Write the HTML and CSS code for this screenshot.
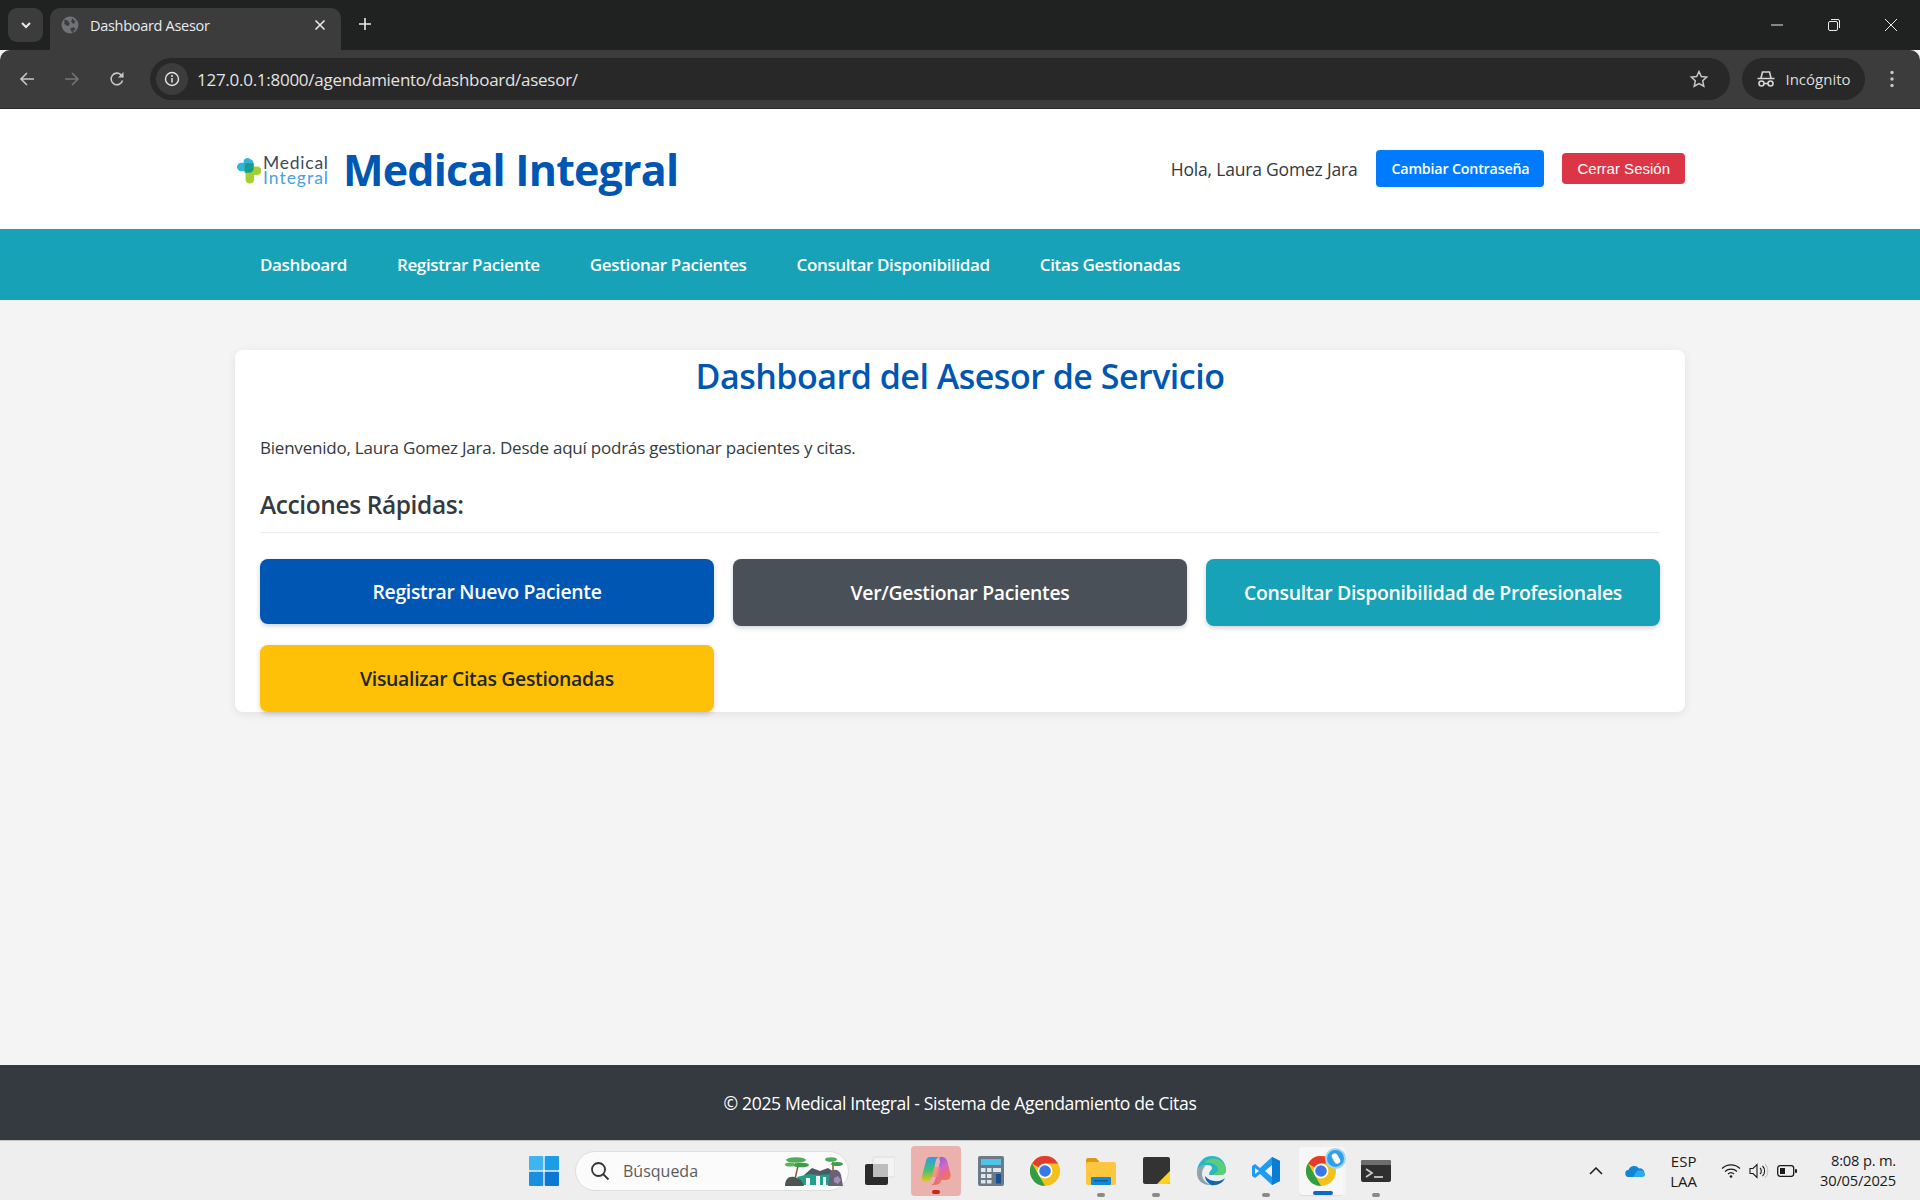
FILE: index.html
```html
<!DOCTYPE html>
<html lang="es">
<head>
    <meta charset="UTF-8">
    <meta name="viewport" content="width=device-width, initial-scale=1.0">
    <title>Dashboard Asesor</title>
    <link rel="stylesheet" href="styles.css">
</head>
<body>
    <div class="tabstrip">
        <div class="tab-search">
            <svg width="14" height="14" viewBox="0 0 14 14"><path d="M3 5l4 4 4-4" fill="none" stroke="#e8eaed" stroke-width="2"/></svg>
        </div>
        <div class="tab">
            <svg class="tab-globe" width="18" height="18" viewBox="0 0 16 16"><circle cx="8" cy="8" r="7.500" fill="#6f7276"/><path d="M3 3l3 1 2 3-2 2-3-2zM10 2l3 3-2 2-2-2zM8 11l3-1 2 1-3 4z" fill="#3d3e40"/></svg>
            <span class="tab-title">Dashboard Asesor</span>
            <svg class="tab-close" width="12" height="12" viewBox="0 0 12 12"><path d="M1.500 1.500l9 9M10.500 1.500l-9 9" stroke="#e8eaed" stroke-width="1.600"/></svg>
        </div>
        <svg class="tab-new" width="14" height="14" viewBox="0 0 14 14"><path d="M7 1v12M1 7h12" stroke="#e8eaed" stroke-width="1.600"/></svg>
        <div class="window-btns">
            <svg width="14" height="14" viewBox="0 0 14 14"><path d="M1 7h12" stroke="#e8eaed" stroke-width="1"/></svg>
            <svg width="14" height="14" viewBox="0 0 14 14"><rect x="1.500" y="3.500" width="9" height="9" rx="1.500" fill="none" stroke="#e8eaed"/><path d="M4 1.500h7a1.500 1.500 0 0 1 1.500 1.500v7" fill="none" stroke="#e8eaed"/></svg>
            <svg width="14" height="14" viewBox="0 0 14 14"><path d="M1 1l12 12M13 1L1 13" stroke="#e8eaed" stroke-width="1"/></svg>
        </div>
    </div>

    <div class="toolbar">
        <svg class="tool-icon" width="16" height="16" viewBox="0 0 16 16"><path d="M15 8H2M8 2L2 8l6 6" fill="none" stroke="#c7c7c7" stroke-width="1.600"/></svg>
        <svg class="tool-icon" width="16" height="16" viewBox="0 0 16 16"><path d="M1 8h13M8 2l6 6-6 6" fill="none" stroke="#757575" stroke-width="1.600"/></svg>
        <svg class="tool-icon" width="16" height="16" viewBox="0 0 16 16"><path d="M13.500 9.500A5.800 5.800 0 1 1 12 3.800L14 6" fill="none" stroke="#c7c7c7" stroke-width="1.600"/><path d="M14.500 1v5.500H9z" fill="#c7c7c7"/></svg>
        <div class="omnibox">
            <div class="site-info">
                <svg width="16" height="16" viewBox="0 0 16 16"><circle cx="8" cy="8" r="6.500" fill="none" stroke="#e3e3e3" stroke-width="1.400"/><path d="M8 7v4.500" stroke="#e3e3e3" stroke-width="1.500"/><circle cx="8" cy="4.900" r="1" fill="#e3e3e3"/></svg>
            </div>
            <span class="url">127.0.0.1:8000/agendamiento/dashboard/asesor/</span>
            <svg class="star" width="20" height="20" viewBox="0 0 20 20"><path d="M10 2.500l2.300 5 5.400.6-4 3.700 1.100 5.400L10 14.500l-4.800 2.700 1.100-5.400-4-3.700 5.400-.6z" fill="none" stroke="#c7c7c7" stroke-width="1.500"/></svg>
        </div>
        <div class="incognito">
            <svg width="20" height="18" viewBox="0 0 20 18"><path d="M5 8l1.500-6h7L15 8M1.500 8.500h17" fill="none" stroke="#d5d5d5" stroke-width="1.600"/><circle cx="5.500" cy="13.500" r="2.500" fill="none" stroke="#d5d5d5" stroke-width="1.600"/><circle cx="14.500" cy="13.500" r="2.500" fill="none" stroke="#d5d5d5" stroke-width="1.600"/><path d="M8 13.500h4" stroke="#d5d5d5" stroke-width="1.600"/></svg>
            <span>Incógnito</span>
        </div>
        <svg class="menu-dots" width="6" height="18" viewBox="0 0 6 18"><circle cx="3" cy="2.500" r="1.700" fill="#c7c7c7"/><circle cx="3" cy="9" r="1.700" fill="#c7c7c7"/><circle cx="3" cy="15.500" r="1.700" fill="#c7c7c7"/></svg>
    </div>

    <header class="site-header">
        <div class="container header-row">
            <div class="brand">
                <svg class="logo" width="92" height="40" viewBox="0 0 92 40">
                    <g transform="translate(0 8) scale(.95)">
                        <path d="M9 1.500a4 4 0 0 1 4 0l3 2c1 1 1.500 2 1.500 4V10h-4v5H5c-3 0-5-2-5-4.500S2 6 5 6h2V4c0-1 1-2 2-2.500z" fill="#2fb4dc"/>
                        <path d="M13 10h8c3 0 4.500 2 4.500 4.500S24 19 21 19h-3v5c0 2.500-2 4-4.500 4S9 26.500 9 24v-9h4z" fill="#a3cf33"/>
                        <path d="M8 6.500h9.500V12c0 2.500-2 4.500-4.500 4.500H8z" fill="#1c9a8a"/>
                    </g>
                    <text class="logo-top" x="26" y="20" textLength="65">Medical</text>
                    <text class="logo-bottom" x="26" y="35" textLength="65">Integral</text>
                </svg>
                <h1 class="brand-name">Medical Integral</h1>
            </div>
            <div class="user-area">
                <span class="hello">Hola, Laura Gomez Jara</span>
                <a class="btn-pass" href="#">Cambiar Contraseña</a>
                <a class="btn-logout" href="#">Cerrar Sesión</a>
            </div>
        </div>
    </header>

    <nav class="main-nav">
        <div class="container nav-row">
            <a href="#">Dashboard</a>
            <a href="#">Registrar Paciente</a>
            <a href="#">Gestionar Pacientes</a>
            <a href="#">Consultar Disponibilidad</a>
            <a href="#">Citas Gestionadas</a>
        </div>
    </nav>

    <main class="content">
        <section class="card">
            <h2 class="card-title">Dashboard del Asesor de Servicio</h2>
            <p class="welcome">Bienvenido, Laura Gomez Jara. Desde aquí podrás gestionar pacientes y citas.</p>
            <h3 class="section-title">Acciones Rápidas:</h3>
            <div class="actions">
                <a class="action action-blue" href="#">Registrar Nuevo Paciente</a>
                <a class="action action-gray" href="#">Ver/Gestionar Pacientes</a>
                <a class="action action-teal" href="#">Consultar Disponibilidad de Profesionales</a>
                <a class="action action-yellow" href="#">Visualizar Citas Gestionadas</a>
            </div>
        </section>
    </main>

    <footer class="site-footer">© 2025 Medical Integral - Sistema de Agendamiento de Citas</footer>

    <div class="taskbar">
        <div class="task-center">
            <svg class="task-start" width="30" height="30" viewBox="0 0 30 30">
                <rect x="0" y="0" width="14.300" height="14.300" rx="1" fill="#3fb4f0"/>
                <rect x="15.700" y="0" width="14.300" height="14.300" rx="1" fill="#1b9de6"/>
                <rect x="0" y="15.700" width="14.300" height="14.300" rx="1" fill="#1a8fe0"/>
                <rect x="15.700" y="15.700" width="14.300" height="14.300" rx="1" fill="#0a78d4"/>
            </svg>
            <div class="task-search">
                <svg width="20" height="20" viewBox="0 0 20 20"><circle cx="8.500" cy="8.500" r="6.500" fill="none" stroke="#333" stroke-width="1.800"/><path d="M13 13l5.500 5.500" stroke="#333" stroke-width="1.800"/></svg>
                <span>Búsqueda</span>
                <svg class="search-art" width="60" height="30" viewBox="0 0 60 30">
                    <path d="M11 23L14 10" stroke="#8a5a2e" stroke-width="1.500"/>
                    <path d="M49 17V6" stroke="#8a5a2e" stroke-width="1.500"/>
                    <ellipse cx="12" cy="4" rx="10" ry="2.800" fill="#4fae55"/>
                    <ellipse cx="17" cy="9" rx="8" ry="2.300" fill="#3f9c4a"/>
                    <ellipse cx="6" cy="8.500" rx="5" ry="2" fill="#57b65c"/>
                    <ellipse cx="47" cy="3.500" rx="6" ry="2.300" fill="#4fae55"/>
                    <ellipse cx="53" cy="8" rx="6" ry="2" fill="#3f9c4a"/>
                    <path d="M20 19l8-7 8 3 8-3 6 4 3 11H22z" fill="#4f5a66"/>
                    <path d="M13 21l12-3 11 1 13-1 4 11H17z" fill="#1f9f8c"/>
                    <path d="M1 30c0-7 4-10 9-9 5 1 9 4 10 9z" fill="#4c5550"/>
                    <path d="M22 22h4v8h-4zM32 20h4v10h-4zM39 21h3v9h-3z" fill="#eef7f6"/>
                    <path d="M46 16c4-4 10-2 11 3l2 11H44z" fill="#6a6178"/>
                    <path d="M50 22l4-2 3 4-3 4-4-2z" fill="#a08fb0"/>
                </svg>
            </div>
            <svg class="task-icon" width="30" height="30" viewBox="0 0 30 30">
                <rect x="8" y="1" width="22" height="20" rx="2" fill="#f3f3f3" stroke="#ddd"/>
                <rect x="0" y="8" width="23" height="21" rx="2" fill="#2b2b2b"/>
                <rect x="8" y="8" width="15" height="13" fill="#bdbdbd"/>
            </svg>
            <div class="task-copilot">
                <svg width="30" height="30" viewBox="0 0 30 30">
                    <defs>
                        <linearGradient id="cpA" x1="0" y1="0" x2="0" y2="1"><stop offset="0" stop-color="#2b9bea"/><stop offset=".55" stop-color="#49c26a"/><stop offset="1" stop-color="#f4c21b"/></linearGradient>
                        <linearGradient id="cpB" x1="0" y1="0" x2="0.600" y2="1"><stop offset="0" stop-color="#5a5fe6"/><stop offset=".55" stop-color="#d765c6"/><stop offset="1" stop-color="#f5773a"/></linearGradient>
                    </defs>
                    <path d="M9 1h10c-2 0-3.500 1-4 3L11 21c-1 3-3 5-6 5H5C2 26 0 23 1 20L5 5c.5-2.500 2-4 4-4z" fill="url(#cpA)"/>
                    <path d="M19 1h2c3 0 5 2 5.500 5l3 12c.5 3-1 6-4 6h-5l-1 2c-1 2-3 3-6 3H8c4 0 5-2 6-5l5-18c0-2-1-5 0-5z" fill="url(#cpB)"/>
                    <path d="M13 11h7l-3 10h-7z" fill="#f08a6b" opacity=".7"/>
                </svg>
                <span class="copilot-dot"></span>
            </div>
            <svg class="task-icon task-calc" width="26" height="30" viewBox="0 0 26 30">
                <rect x="0" y="0" width="26" height="30" rx="2" fill="#6b7a88"/>
                <rect x="3" y="3" width="20" height="6" fill="#4fc3ea"/>
                <rect x="3" y="12" width="4.500" height="4" fill="#dfe5ea"/><rect x="9" y="12" width="4.500" height="4" fill="#dfe5ea"/><rect x="15" y="12" width="8" height="4" fill="#dfe5ea"/>
                <rect x="3" y="18" width="4.500" height="4" fill="#dfe5ea"/><rect x="9" y="18" width="4.500" height="4" fill="#dfe5ea"/>
                <rect x="3" y="24" width="4.500" height="3.500" fill="#dfe5ea"/><rect x="9" y="24" width="4.500" height="3.500" fill="#dfe5ea"/>
                <rect x="18" y="18" width="5" height="9.500" fill="#1a4f8c"/>
            </svg>
            <svg class="task-icon task-chrome" width="30" height="30" viewBox="0 0 30 30">
                <circle cx="15" cy="15" r="15" fill="#f2c21a"/>
                <path d="M15 15L2 7.500A15 15 0 0 1 28 7.500H15z" fill="#e33b2e"/>
                <path d="M15 30A15 15 0 0 1 2 7.500L9 19.500 15 30z" fill="#2f9e44"/>
                <circle cx="15" cy="15" r="7.500" fill="#fff"/>
                <circle cx="15" cy="15" r="5.800" fill="#3b78e7"/>
            </svg>
            <div class="task-slot">
                <svg width="30" height="28" viewBox="0 0 30 28">
                    <path d="M0 3a2 2 0 0 1 2-2h8l3 3h0v4H0z" fill="#d99a0e"/>
                    <rect x="0" y="5" width="30" height="23" rx="2" fill="#fcc73f"/>
                    <rect x="5" y="20" width="20" height="8" rx="1" fill="#0f8ad8"/>
                    <rect x="8" y="23" width="14" height="1.500" fill="#0a5ea0"/>
                </svg>
                <span class="task-dot"></span>
            </div>
            <div class="task-slot">
                <svg width="27" height="27" viewBox="0 0 27 27">
                    <rect width="27" height="27" rx="2" fill="#333"/>
                    <path d="M27 14v11a2 2 0 0 1-2 2H14z" fill="#ffd21e"/>
                </svg>
                <span class="task-dot"></span>
            </div>
            <svg class="task-icon" width="30" height="30" viewBox="0 0 30 30">
                <path d="M1 15C2 6 8 0 16 0c8 0 14 6 14 14 0 3-2 5-6 5H13c0-4 3-5 3-7 0-2-2-3-5-3-5 0-9 3-10 6z" fill="#2ab5c9"/>
                <path d="M8 7c4-5 12-6 17-2 4 3 5 6 5 9 0 3-2 5-6 5h-7c1-2 5-2 5-6 0-4-6-7-14-6z" fill="#5bce7a"/>
                <path d="M1 15c0-3 5-6 9-6-3 3-4 6-4 9 0 5 4 9 9 11C7 30 0 24 1 15z" fill="#8fa3ae"/>
                <path d="M15 29c-3-2-6-5-6-9 5 6 14 7 20 2-2 5-8 8-14 7z" fill="#1565b0"/>
            </svg>
            <div class="task-slot">
                <svg width="30" height="30" viewBox="0 0 30 30">
                    <path d="M21 1l8 4v20l-8 4L9 18l-5 4-3-2v-10l3-2 5 4z" fill="#1f9cf0"/>
                    <path d="M21 1l8 4v20l-8 4z" fill="#0a7cd1"/>
                    <path d="M21 9l-7 6 7 6z" fill="#f0f0f0"/>
                    <path d="M4 12l4 3-4 3z" fill="#f0f0f0"/>
                </svg>
                <span class="task-dot"></span>
            </div>
            <div class="task-active">
                <svg width="30" height="30" viewBox="0 0 30 30">
                    <circle cx="15" cy="15" r="15" fill="#f2c21a"/>
                    <path d="M15 15L2 7.500A15 15 0 0 1 28 7.500H15z" fill="#e33b2e"/>
                    <path d="M15 30A15 15 0 0 1 2 7.500L9 19.500 15 30z" fill="#2f9e44"/>
                    <circle cx="15" cy="15" r="7.500" fill="#fff"/>
                    <circle cx="15" cy="15" r="5.800" fill="#3b78e7"/>
                </svg>
                <span class="task-badge"><span class="task-badge-mark"></span></span>
                <span class="task-bar"></span>
            </div>
            <div class="task-slot">
                <svg width="30" height="22" viewBox="0 0 30 22">
                    <rect width="30" height="22" rx="2" fill="#2f2f2f"/>
                    <path d="M0 2a2 2 0 0 1 2-2h26a2 2 0 0 1 2 2v3H0z" fill="#6d6d6d"/>
                    <path d="M5 9l6 4-6 4" fill="none" stroke="#c9c9c9" stroke-width="1.800"/>
                    <path d="M13 17h9" stroke="#c9c9c9" stroke-width="1.800"/>
                </svg>
                <span class="task-dot"></span>
            </div>
        </div>
        <div class="tray">
            <svg width="14" height="8" viewBox="0 0 14 8"><path d="M1 7l6-6 6 6" fill="none" stroke="#1a1a1a" stroke-width="1.500"/></svg>
            <svg class="tray-cloud" width="20" height="13" viewBox="0 0 20 13"><path d="M4 13a3.500 3.500 0 0 1-.5-7A6 6 0 0 1 14 4.500 4.300 4.300 0 0 1 16 13z" fill="#1284d8"/><path d="M8 13l4-6c3-2 8 0 8 3.500 0 1.500-1 2.500-3 2.500z" fill="#2fa8ec"/></svg>
            <div class="lang"><span>ESP</span><span>LAA</span></div>
            <div class="tray-icons">
                <svg width="20" height="15" viewBox="0 0 20 15"><path d="M1 5.500a13 13 0 0 1 18 0M4 8.500a9 9 0 0 1 12 0M7 11a4.500 4.500 0 0 1 6 0" fill="none" stroke="#1a1a1a" stroke-width="1.200"/><circle cx="10" cy="13.500" r="1.300" fill="#1a1a1a"/></svg>
                <svg width="20" height="16" viewBox="0 0 20 16"><path d="M1 5.500h3l4-4v13l-4-4H1z" fill="none" stroke="#1a1a1a" stroke-width="1.100"/><path d="M11 5a4 4 0 0 1 0 6M13.500 3a7 7 0 0 1 0 10" fill="none" stroke="#1a1a1a" stroke-width="1.100"/><path d="M16 1a10 10 0 0 1 0 14" fill="none" stroke="#c4c4c4" stroke-width="1.100"/></svg>
                <svg width="20" height="12" viewBox="0 0 20 12"><rect x=".7" y=".7" width="16" height="10.600" rx="2.500" fill="none" stroke="#1a1a1a" stroke-width="1.300"/><rect x="3" y="3" width="5" height="6" fill="#1a1a1a"/><rect x="18" y="4" width="2" height="4" rx="1" fill="#1a1a1a"/></svg>
            </div>
            <div class="clock"><span>8:08 p. m.</span><span>30/05/2025</span></div>
        </div>
    </div>
</body>
</html>
```

FILE: styles.css
```css
* {
    box-sizing: border-box;
}

html, body {
    height: 100%;
}

body {
    margin: 0;
    display: flex;
    flex-direction: column;
    height: 1200px;
    overflow: hidden;
    font-family: "Open Sans", "Noto Sans", Arial, sans-serif;
    background-color: #f4f4f4;
    color: #333a40;
}

a {
    text-decoration: none;
}

/* browser frame */
.tabstrip {
    height: 50px;
    flex: none;
    display: flex;
    align-items: flex-end;
    background-color: #202222;
    color: #e8eaed;
    padding-left: 8px;
}

.tab-search {
    width: 35px;
    height: 34px;
    margin-bottom: 8px;
    border-radius: 9px;
    background-color: #3c3c3c;
    display: flex;
    align-items: center;
    justify-content: center;
}

.tab {
    width: 291px;
    height: 42px;
    margin-left: 7px;
    padding: 0 15px 8px 11px;
    border-radius: 10px 10px 0 0;
    background-color: #3c3c3c;
    display: flex;
    align-items: center;
}

.tab-globe {
    flex: none;
    margin-right: 11px;
}

.tab-title {
    flex: 1;
    font-size: 14.500px;
    letter-spacing: -0.3px;
}

.tab-close {
    flex: none;
}

.tab-new {
    margin: 0 0 19px 17px;
}

.window-btns {
    margin: 0 22px 18px auto;
    display: flex;
    gap: 43px;
}

.toolbar {
    height: 59px;
    flex: none;
    display: flex;
    align-items: center;
    background-color: #3c3c3c;
    border-radius: 10px 10px 0 0;
    border-bottom: 1px solid #2a2a2a;
    padding: 0 14px 0 19px;
}

.tool-icon {
    flex: none;
    margin-right: 29px;
}

.tool-icon:nth-child(3) {
    margin-right: 25px;
}

.omnibox {
    width: 1580px;
    height: 42px;
    padding: 0 21px 0 6px;
    border-radius: 21px;
    background-color: #282828;
    display: flex;
    align-items: center;
}

.site-info {
    width: 32px;
    height: 32px;
    border-radius: 50%;
    background-color: #3c3c3c;
    display: flex;
    align-items: center;
    justify-content: center;
    margin-right: 9px;
}

.url {
    flex: 1;
    font-size: 17px;
    letter-spacing: -0.27px;
    color: #e3e3e3;
}

.incognito {
    width: 123px;
    height: 42px;
    margin-left: 12px;
    border-radius: 21px;
    background-color: #282828;
    display: flex;
    align-items: center;
    justify-content: center;
    gap: 9px;
    font-size: 15px;
    color: #dcdcdc;
}

.menu-dots {
    margin-left: 24px;
}

/* site */
.container {
    width: 1450px;
    margin: 0 auto;
}

.site-header {
    height: 120px;
    flex: none;
    background-color: #fff;
}

.header-row {
    height: 100%;
    display: flex;
    align-items: center;
    justify-content: space-between;
    padding: 0 0 1px 2px;
}

.brand {
    display: flex;
    align-items: center;
    gap: 14px;
}

.logo {
    flex: none;
}

.logo text {
    font-family: "Lato", sans-serif;
    font-size: 17.500px;
}

.logo-top {
    fill: #3d4a5c;
}

.logo-bottom {
    fill: #4a9fe0;
}

.brand-name {
    margin: 0 0 -2px;
    font-size: 43px;
    font-weight: 700;
    letter-spacing: -0.8px;
    color: #0056b3;
}

.user-area {
    display: flex;
    align-items: center;
    gap: 18px;
}

.hello {
    margin-right: 1px;
    font-size: 17.500px;
    letter-spacing: -0.2px;
    color: #333a40;
}

.btn-pass {
    padding: 9px 15px;
    border-radius: 4px;
    background-color: #007bff;
    color: #fff;
    font-size: 14.300px;
    font-weight: 600;
    letter-spacing: -0.2px;
}

.btn-logout {
    padding: 7px 15px;
    border-radius: 4px;
    background-color: #dc3545;
    color: #fff;
    font-family: "Liberation Sans", Arial, sans-serif;
    font-size: 15px;
}

.main-nav {
    height: 71px;
    flex: none;
    background-color: #17a2b8;
}

.nav-row {
    height: 100%;
    display: flex;
    align-items: center;
    gap: 50px;
    padding-left: 25px;
}

.nav-row a {
    color: #fff;
    font-size: 17px;
    font-weight: 600;
    letter-spacing: -0.36px;
}

.content {
    flex: 1;
    padding-top: 50px;
}

.card {
    width: 1450px;
    height: 362px;
    margin: 0 auto;
    padding: 0 25px;
    border-radius: 8px;
    background-color: #fff;
    box-shadow: 0 2px 10px rgba(0, 0, 0, 0.08);
}

.card-title {
    margin: 0;
    padding-top: 3px;
    text-align: center;
    font-size: 34px;
    font-weight: 600;
    letter-spacing: -0.5px;
    color: #0056b3;
}

.welcome {
    margin: 37px 0 0;
    font-size: 17px;
    letter-spacing: -0.22px;
    color: #333a40;
}

.section-title {
    margin: 29px 0 0;
    padding-bottom: 11px;
    border-bottom: 1px solid #e9ecef;
    font-size: 24.500px;
    font-weight: 600;
    letter-spacing: -0.4px;
    color: #343a40;
}

.actions {
    margin-top: 26px;
    display: grid;
    grid-template-columns: repeat(3, 1fr);
    gap: 19px;
    align-items: start;
}

.action {
    height: 67px;
    border-radius: 8px;
    display: flex;
    align-items: center;
    justify-content: center;
    color: #fff;
    font-size: 19.400px;
    font-weight: 600;
    letter-spacing: -0.3px;
    box-shadow: 0 2px 5px rgba(0, 0, 0, 0.18);
}

.action-blue {
    height: 65px;
    background-color: #0056b3;
}

.action-gray {
    background-color: #495057;
}

.action-teal {
    background-color: #17a2b8;
}

.action-yellow {
    background-color: #ffc107;
    color: #212529;
}

.site-footer {
    height: 75px;
    flex: none;
    display: flex;
    align-items: center;
    justify-content: center;
    background-color: #343a40;
    color: #fff;
    font-size: 17.600px;
    letter-spacing: -0.365px;
}

/* windows taskbar */
.taskbar {
    height: 60px;
    flex: none;
    position: relative;
    display: flex;
    align-items: center;
    background-color: #eeeeee;
    border-top: 1px solid #c4c4c4;
}

.task-center {
    margin-left: 529px;
    display: flex;
    align-items: center;
}

.task-start {
    margin-right: 16px;
}

.task-search {
    width: 274px;
    height: 40px;
    padding: 0 4px 0 14px;
    border-radius: 20px;
    background-color: #fbfbfb;
    border: 1px solid #dedede;
    display: flex;
    align-items: center;
    gap: 13px;
    font-size: 16px;
    color: #5a5a5a;
    margin-right: 16px;
}

.search-art {
    margin-left: auto;
}

.task-icon {
    flex: none;
    margin-right: 25px;
}

.task-calc {
    margin-right: 26px;
}

.task-chrome {
    margin-right: 26px;
}

.task-copilot {
    width: 50px;
    height: 50px;
    margin: 0 17px 0 -9px;
    border-radius: 4px;
    background-color: #ebb2ad;
    position: relative;
    display: flex;
    align-items: center;
    justify-content: center;
}

.copilot-dot {
    position: absolute;
    left: 21px;
    bottom: 2px;
    width: 8px;
    height: 4px;
    border-radius: 2px;
    background-color: #c42b1c;
}

.task-slot {
    position: relative;
    width: 30px;
    height: 30px;
    margin-right: 25px;
    display: flex;
    align-items: center;
    justify-content: center;
}

.task-dot {
    position: absolute;
    left: 11px;
    bottom: -11px;
    width: 8px;
    height: 4px;
    border-radius: 2px;
    background-color: #8a8a8a;
}

.task-active {
    position: relative;
    width: 44px;
    height: 48px;
    margin: 0 18px 0 -7px;
    border-radius: 4px;
    background-color: #f7f7f7;
    box-shadow: 3px 0 0 #f4f4f4, 0 1px 1px #ddd;
    display: flex;
    align-items: center;
    justify-content: center;
}

.task-badge {
    position: absolute;
    right: -3px;
    top: 1px;
    width: 21px;
    height: 21px;
    border-radius: 50%;
    background-color: #2e9fe8;
    border: 2px solid #a5d3f2;
    display: flex;
    align-items: center;
    justify-content: center;
}

.task-badge-mark {
    width: 6px;
    height: 11px;
    border-radius: 3px;
    background-color: #fff;
    transform: rotate(-30deg);
}

.task-bar {
    position: absolute;
    left: 14px;
    bottom: 0;
    width: 20px;
    height: 4px;
    border-radius: 2px;
    background-color: #0a6cc4;
}

.tray {
    position: absolute;
    right: 24px;
    top: 0;
    height: 100%;
    display: flex;
    align-items: center;
    color: #1a1a1a;
    font-size: 14px;
}

.tray-cloud {
    margin-left: 22px;
}

.lang {
    margin-left: 25px;
    display: flex;
    flex-direction: column;
    align-items: center;
    font-size: 15px;
    line-height: 20px;
}

.tray-icons {
    margin-left: 24px;
    display: flex;
    align-items: center;
    gap: 8px;
}

.clock {
    margin: -1px 0 0 23px;
    display: flex;
    flex-direction: column;
    align-items: flex-end;
    font-size: 14.700px;
    line-height: 20px;
    letter-spacing: -0.2px;
}
```
